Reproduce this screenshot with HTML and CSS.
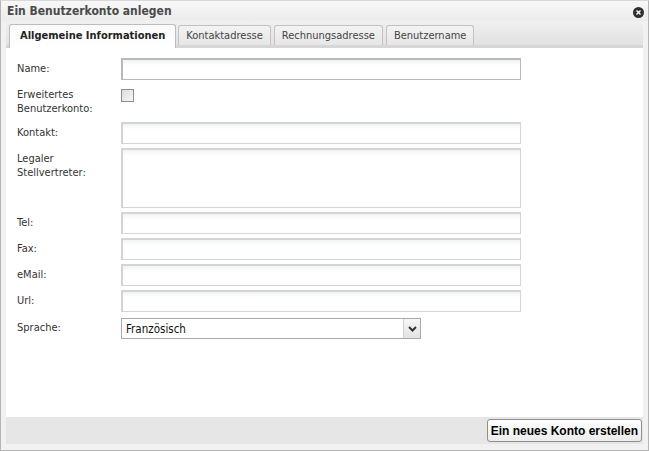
FILE: index.html
```html
<!DOCTYPE html>
<html>
<head>
    <meta charset="utf-8">
    <title>Ein Benutzerkonto anlegen</title>
    <link rel="stylesheet" href="styles.css">
</head>
<body>
    <div class="dialog">
        <div class="titlebar">
            <span class="title">Ein Benutzerkonto anlegen</span>
            <span class="close">
                <svg width="11" height="11" viewBox="0 0 11 11">
                    <circle cx="5.5" cy="5.5" r="5.5" fill="#2f2f2f"/>
                    <path d="M3.5 3.5 L7.5 7.5 M7.5 3.5 L3.5 7.5" stroke="#ffffff" stroke-width="1.4"/>
                </svg>
            </span>
        </div>
        <div class="tabs">
            <div class="tab active">Allgemeine Informationen</div>
            <div class="tab">Kontaktadresse</div>
            <div class="tab">Rechnungsadresse</div>
            <div class="tab">Benutzername</div>
        </div>
        <div class="panel">
            <form class="form">
                <label class="label" for="name">Name:</label>
                <input class="input focus" id="name" type="text">

                <label class="label" for="ext">Erweitertes Benutzerkonto:</label>
                <div class="check-cell"><span class="checkbox" id="ext"></span></div>

                <label class="label" for="kontakt">Kontakt:</label>
                <input class="input" id="kontakt" type="text">

                <label class="label" for="legal">Legaler Stellvertreter:</label>
                <textarea class="input area" id="legal"></textarea>

                <label class="label" for="tel">Tel:</label>
                <input class="input" id="tel" type="text">

                <label class="label" for="fax">Fax:</label>
                <input class="input" id="fax" type="text">

                <label class="label" for="mail">eMail:</label>
                <input class="input" id="mail" type="text">

                <label class="label" for="url">Url:</label>
                <input class="input" id="url" type="text">

                <label class="label lang-label" for="lang">Sprache:</label>
                <div class="select" id="lang">
                    <span class="select-text">Französisch</span>
                    <span class="select-btn">
                        <svg width="9" height="6" viewBox="0 0 9 6">
                            <path d="M1 1 L4.5 4.5 L8 1" stroke="#333" stroke-width="2" fill="none"/>
                        </svg>
                    </span>
                </div>
            </form>
        </div>
        <div class="footer">
            <button type="button" class="button">Ein neues Konto erstellen</button>
        </div>
    </div>
</body>
</html>
```

FILE: styles.css
```css
/* General */
html, body {
    margin: 0;
    padding: 0;
    background: #ffffff;
}
body {
    font-family: 'DejaVu Sans Condensed', 'DejaVu Sans', sans-serif;
    font-size: 11px;
    color: #333333;
}
/* Dialog frame */
.dialog {
    width: 649px;
    height: 451px;
    box-sizing: border-box;
    background: #f1f1f1;
    border: 1px solid #b5b5b5;
    border-top-color: #d8d8d8;
    padding: 0 5px 6px 5px;
    display: flex;
    flex-direction: column;
}
/* Title bar */
.titlebar {
    height: 20px;
    display: flex;
    align-items: center;
    justify-content: space-between;
    margin: 0 -5px;
    padding: 0 4px 0 6px;
    background: linear-gradient(#f7f7f7, #ececec);
}
.title {
    font-weight: bold;
    color: #4a4a4a;
    font-size: 12px;
}
.close {
    display: flex;
    margin-top: 3px;
}
/* Tabs */
.tabs {
    height: 24px;
    display: flex;
    align-items: flex-end;
    padding-left: 3px;
    background: linear-gradient(#f0f0f0, #e1e1e1);
    border-bottom: 3px solid #d6d6d6;
}
.tab {
    height: 19px;
    line-height: 19px;
    padding: 0 7px;
    margin-right: 3px;
    border: 1px solid #c2c2c2;
    border-bottom: none;
    border-radius: 3px 3px 0 0;
    background: linear-gradient(#f3f3f3, #e6e6e6);
    color: #444444;
}
.tab.active {
    height: 21px;
    line-height: 22px;
    margin-bottom: -3px;
    margin-right: 2px;
    padding: 0 10px 2px 10px;
    background: linear-gradient(#fafafa, #ffffff);
    border-color: #bdbdbd;
    font-weight: bold;
    color: #222222;
}
/* Panel */
.panel {
    flex: 1;
    background: #ffffff;
    padding: 10px 0 0 11px;
}
.form {
    display: grid;
    grid-template-columns: 104px 400px;
    grid-template-rows: 22px 34px 22px 60px 22px 22px 22px 22px 22px;
    row-gap: 4px;
}
.label {
    padding-top: 4px;
    line-height: 14px;
    color: #333333;
}
.input {
    box-sizing: border-box;
    width: 400px;
    height: 22px;
    margin: 0;
    border: 2px solid #d4d4d4;
    border-width: 2px 1px 1px 2px;
    background: linear-gradient(#f1f4f2 0px, #ffffff 6px);
    font: inherit;
    outline: none;
}
.input.focus {
    border-color: #b9b9b9;
}
.area {
    height: 60px;
    resize: none;
}
.check-cell {
    padding-top: 5px;
}
.checkbox {
    display: block;
    width: 11px;
    height: 11px;
    border: 1px solid #8e8e8e;
    background: linear-gradient(135deg, #dcdcdc, #f8f8f8);
}
.lang-label {
    padding-top: 5px;
}
.select {
    box-sizing: border-box;
    width: 300px;
    height: 21px;
    margin-top: 2px;
    border: 1px solid #a9a9a9;
    display: flex;
    align-items: center;
    justify-content: space-between;
    background: #ffffff;
}
.select-text {
    padding-left: 4px;
    font-size: 11.5px;
    color: #111111;
}
.select-btn {
    width: 16px;
    height: 19px;
    display: flex;
    align-items: center;
    justify-content: center;
    border-left: 1px solid #d0d0d0;
    background: linear-gradient(#f7f7f7, #e3e3e3);
}
/* Footer */
.footer {
    height: 27px;
    background: #e6e6e6;
    display: flex;
    justify-content: flex-end;
    align-items: center;
    padding-right: 1px;
}
.button {
    height: 23px;
    padding: 0 3px;
    font-family: 'Liberation Sans', Arial, sans-serif;
    font-size: 12px;
    font-weight: bold;
    color: #000000;
    border: 1px solid #8f8f8f;
    border-radius: 3px;
    background: linear-gradient(#ffffff, #ececec);
}
```
